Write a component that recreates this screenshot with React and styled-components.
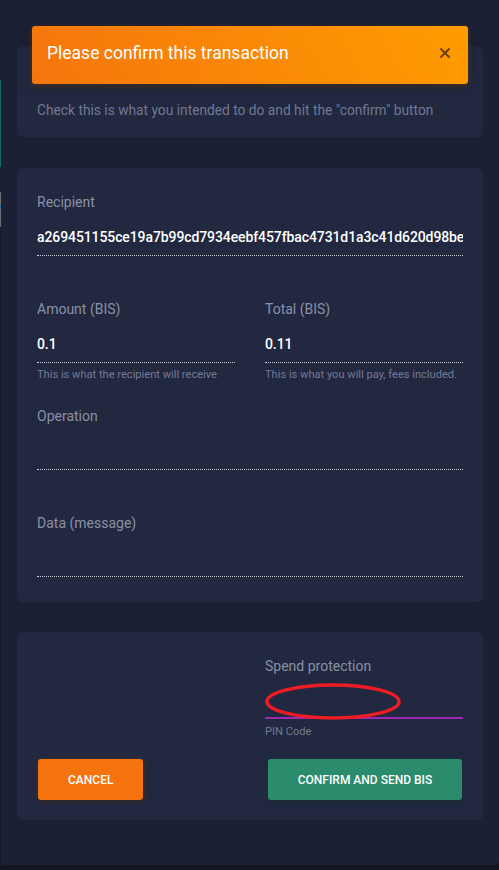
import React from 'react'
import styled, { createGlobalStyle } from 'styled-components'

const GlobalStyle = createGlobalStyle`
    html, body {
        margin: 0;
        padding: 0;
        background: #12161f;
        font-family: Roboto, "Liberation Sans", Arial, sans-serif;
    }
`

const Page = styled.div`
    display: flex;
    align-items: flex-start;
    width: 499px;
    height: 870px;
`

// bits of the page behind the dialog, peeking out on the left edge
const Edge = styled.div`
    width: 1px;
    height: 865px;
    background: linear-gradient(
        to bottom,
        #1a1f30 0, #1a1f30 80px,
        #0f6a6a 80px, #0f6a6a 167px,
        #1a1f30 167px, #1a1f30 192px,
        #6d6f77 192px, #6d6f77 205px,
        #2c6d9c 205px, #2c6d9c 209px,
        #6d6f77 209px, #6d6f77 227px,
        #141826 227px
    );
`

const Panel = styled.div`
    width: 498px;
    height: 865px;
    box-sizing: border-box;
    padding: 46px 16px 0 16px;
    background: #1b2034;
    border-radius: 0 0 4px 4px;
    display: flex;
    flex-direction: column;
`

const Card = styled.div`
    background: #212840;
    border-radius: 6px;
    margin-top: ${props => props.$top || 0}px;
    padding: ${props => props.$padding || '24px 20px 25px'};
`

const Header = styled.div`
    margin: -20px -5px 0;
    height: 58px;
    box-sizing: border-box;
    padding: 0 17px 5px 15px;
    display: flex;
    align-items: center;
    justify-content: space-between;
    border-radius: 3px;
    background: linear-gradient(60deg, #f5750d, #ff9c00);
    box-shadow: 0 4px 12px rgba(0, 0, 0, 0.35), 0 2px 6px rgba(255, 152, 0, 0.25);
    color: #fff;
    font-size: 17.5px;
    font-weight: 400;
`

const Close = styled.button`
    border: 0;
    background: none;
    padding: 0;
    width: 12px;
    height: 12px;
    display: flex;
    cursor: pointer;
`

const Description = styled.p`
    margin: 16px 0 0;
    font-size: 13.75px;
    line-height: 20px;
    color: #717892;
`

const Row = styled.div`
    display: grid;
    grid-template-columns: ${props => (props.$split ? '1fr 1fr' : '1fr')};
    column-gap: 30px;
    margin-top: ${props => props.$top || 0}px;
`

const Field = styled.div`
    position: relative;
    min-width: 0;
`

const Label = styled.div`
    font-size: 14px;
    line-height: 20px;
    color: #8a90a6;
`

const Value = styled.div`
    padding: 15px 0 8px;
    font-size: 14px;
    line-height: 20px;
    font-weight: 500;
    letter-spacing: -0.1px;
    color: #fff;
    white-space: nowrap;
    overflow: hidden;
    height: 20px;
    border-bottom: 1px dotted #c9ccd5;
`

const Helper = styled.div`
    margin-top: 5px;
    font-size: 11.1px;
    line-height: 14px;
    color: #737a94;
`

const PinInput = styled.div`
    position: relative;
    height: 41px;
    border-bottom: 2px solid #9c27b0;
`

const Mark = styled.svg`
    position: absolute;
    left: 0;
    top: 7px;
`

const PinHelper = styled(Helper)`
    margin-top: 6px;
`

const Actions = styled.div`
    display: grid;
    grid-template-columns: 1fr 1fr;
    column-gap: 30px;
    margin-top: 20px;
`

const Button = styled.button`
    justify-self: ${props => (props.$wide ? 'stretch' : 'start')};
    margin: 0 1px 0 ${props => (props.$wide ? 3 : 1)}px;
    height: 41px;
    padding: 0 ${props => (props.$wide ? 0 : 30)}px;
    border: 0;
    border-radius: 3px;
    background: ${props => props.$color};
    color: #fff;
    font-family: inherit;
    font-size: 12px;
    font-weight: 500;
    text-transform: uppercase;
    box-shadow: 0 2px 4px rgba(0, 0, 0, 0.3), 0 1px 6px ${props => props.$glow};
    cursor: pointer;
`

function App() {
    return (
        <Page>
            <GlobalStyle />
            <Edge />
            <Panel>
                <Card $padding="0 20px 17px">
                    <Header>
                        Please confirm this transaction
                        <Close aria-label="close">
                            <svg width="12" height="12" viewBox="0 0 12 12">
                                <path d="M1.5 1.5 L10.5 10.5 M10.5 1.5 L1.5 10.5" stroke="rgba(60,35,10,0.75)" strokeWidth="2" />
                            </svg>
                        </Close>
                    </Header>
                    <Description>Check this is what you intended to do and hit the "confirm" button</Description>
                </Card>

                <Card $top={31}>
                    <Row>
                        <Field>
                            <Label>Recipient</Label>
                            <Value>a269451155ce19a7b99cd7934eebf457fbac4731d1a3c41d620d98be</Value>
                        </Field>
                    </Row>
                    <Row $split $top={43}>
                        <Field>
                            <Label>Amount (BIS)</Label>
                            <Value>0.1</Value>
                            <Helper>This is what the recipient will receive</Helper>
                        </Field>
                        <Field>
                            <Label>Total (BIS)</Label>
                            <Value>0.11</Value>
                            <Helper>This is what you will pay, fees included.</Helper>
                        </Field>
                    </Row>
                    <Row $top={24}>
                        <Field>
                            <Label>Operation</Label>
                            <Value />
                        </Field>
                    </Row>
                    <Row $top={43}>
                        <Field>
                            <Label>Data (message)</Label>
                            <Value />
                        </Field>
                    </Row>
                </Card>

                <Card $top={30} $padding="24px 20px 20px">
                    <Row $split>
                        <div />
                        <Field>
                            <Label>Spend protection</Label>
                            <PinInput>
                                <Mark width="136" height="37" viewBox="0 0 136 37">
                                    <ellipse cx="68" cy="18.5" rx="66" ry="16.5" fill="none" stroke="#ee1c24" strokeWidth="3.5" />
                                </Mark>
                            </PinInput>
                            <PinHelper>PIN Code</PinHelper>
                        </Field>
                    </Row>
                    <Actions>
                        <Button $color="#f5730f" $glow="rgba(245,115,15,0.25)">Cancel</Button>
                        <Button $wide $color="#2a8b6d" $glow="rgba(42,139,109,0.25)">Confirm and send BIS</Button>
                    </Actions>
                </Card>
            </Panel>
        </Page>
    )
}

export default App
